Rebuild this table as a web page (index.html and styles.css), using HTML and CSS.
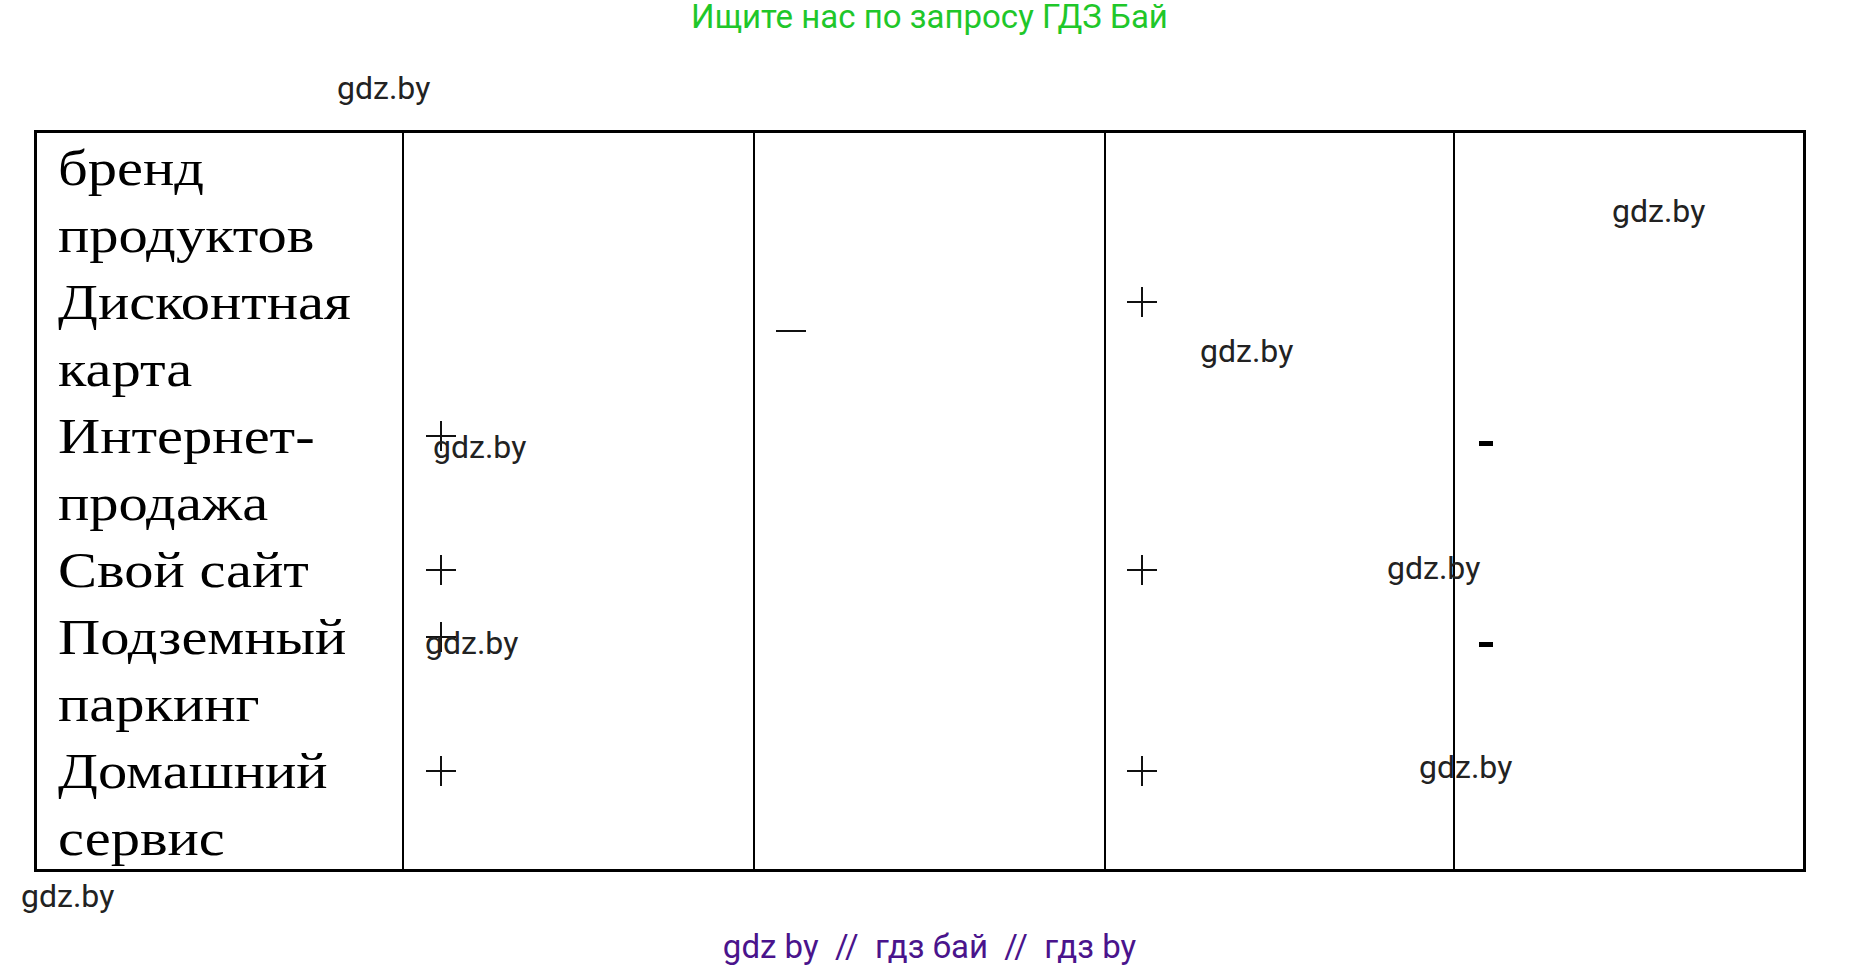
FILE: index.html
```html
<!DOCTYPE html>
<html lang="ru">
<head>
<meta charset="utf-8">
<title>gdz.by</title>
<link rel="stylesheet" href="styles.css">
</head>
<body>
<div class="page">
  <header class="promo">Ищите нас по запросу ГДЗ Бай</header>

  <div class="sheet">
    <div class="col col-name">
      <div class="line">бренд</div>
      <div class="line">продуктов</div>
      <div class="line">Дисконтная</div>
      <div class="line">карта</div>
      <div class="line">Интернет-</div>
      <div class="line">продажа</div>
      <div class="line">Свой сайт</div>
      <div class="line">Подземный</div>
      <div class="line">паркинг</div>
      <div class="line">Домашний</div>
      <div class="line">сервис</div>
    </div>
    <div class="col col-b">
      <span class="plus r5"></span>
      <span class="plus r7"></span>
      <span class="plus r8"></span>
      <span class="plus r10"></span>
    </div>
    <div class="col col-c">
      <span class="dash r3"></span>
    </div>
    <div class="col col-d">
      <span class="plus r3"></span>
      <span class="plus r7"></span>
      <span class="plus r10"></span>
    </div>
    <div class="col col-e">
      <span class="hyph r5"></span>
      <span class="hyph r8"></span>
    </div>
  </div>

  <footer class="footer">gdz by  //  гдз бай  //  гдз by</footer>

  <span class="wm wm-1">gdz.by</span>
  <span class="wm wm-2">gdz.by</span>
  <span class="wm wm-3">gdz.by</span>
  <span class="wm wm-4">gdz.by</span>
  <span class="wm wm-5">gdz.by</span>
  <span class="wm wm-6">gdz.by</span>
  <span class="wm wm-7">gdz.by</span>
  <span class="wm wm-8">gdz.by</span>
</div>
</body>
</html>
```

FILE: styles.css
```css
html, body {
  margin: 0;
  padding: 0;
  background: #ffffff;
}

.page {
  position: relative;
  width: 1859px;
  min-height: 968px;
}

.promo {
  font-family: Roboto, "Liberation Sans", sans-serif;
  font-size: 33px;
  line-height: 34px;
  color: #1fc72a;
  text-align: center;
}

.sheet {
  margin: 96px 0 0 34px;
  width: 1772px;
  height: 742px;
  box-sizing: border-box;
  border: 3px solid #000;
  display: grid;
  grid-template-columns: 365px 351px 351px 349px 350px;
}

.col {
  box-sizing: border-box;
  padding-top: 4px;
  display: grid;
  grid-template-rows: repeat(11, 67px);
  align-content: start;
  overflow: hidden;
}

.col + .col {
  border-left: 2px solid #000;
}

.col-name {
  padding-top: 2px;
  padding-left: 21px;
  font-family: "Liberation Serif", "Times New Roman", serif;
  font-size: 50px;
  line-height: 67px;
  color: #000;
}

.col-name .line {
  white-space: nowrap;
  transform: scaleX(1.17);
  transform-origin: 0 50%;
}

.r3 { grid-row: 3; }
.r5 { grid-row: 5; }
.r7 { grid-row: 7; }
.r8 { grid-row: 8; }
.r10 { grid-row: 10; }

.plus {
  position: relative;
  display: block;
  width: 30px;
  height: 30px;
  margin-top: 16px;
}

.plus::before,
.plus::after {
  content: "";
  position: absolute;
  background: #111;
}

.plus::before {
  left: 14px;
  top: 0;
  width: 2px;
  height: 30px;
}

.plus::after {
  left: 0;
  top: 14px;
  width: 30px;
  height: 2px;
}

.col-b .plus { margin-left: 22px; }
.col-d .plus { margin-left: 21px; }

.dash {
  display: block;
  width: 30px;
  height: 2px;
  margin: 59px 0 0 21px;
  background: #111;
}

.hyph {
  display: block;
  width: 14px;
  height: 5px;
  margin: 36px 0 0 24px;
  background: #000;
}

.footer {
  margin-top: 58px;
  font-family: Roboto, "Liberation Sans", sans-serif;
  font-size: 33px;
  line-height: 34px;
  color: #4a148c;
  text-align: center;
  white-space: pre;
}

.wm {
  position: absolute;
  font-family: Roboto, "Liberation Sans", sans-serif;
  font-size: 32px;
  line-height: 36px;
  color: #222;
  white-space: nowrap;
}

.wm-1 { left: 337px; top: 70px; }
.wm-2 { left: 1612px; top: 193px; }
.wm-3 { left: 1200px; top: 333px; }
.wm-4 { left: 433px; top: 429px; }
.wm-5 { left: 425px; top: 625px; }
.wm-6 { left: 1387px; top: 550px; }
.wm-7 { left: 1419px; top: 749px; }
.wm-8 { left: 21px; top: 878px; }
```
